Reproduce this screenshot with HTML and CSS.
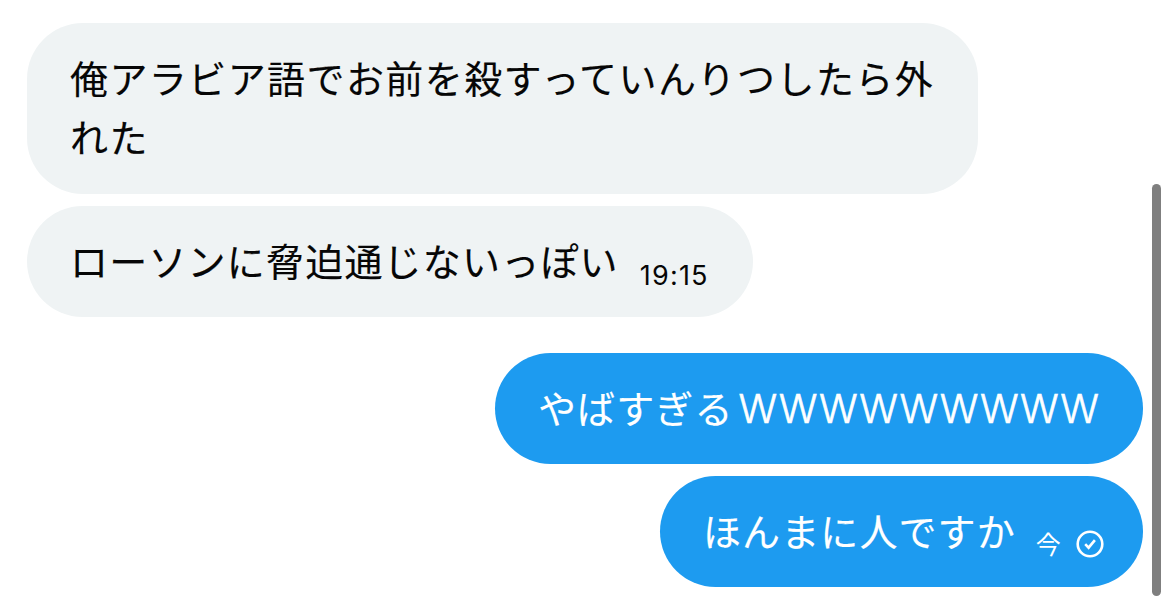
FILE: index.html
```html
<!DOCTYPE html>
<html lang="ja">
<head>
  <meta charset="UTF-8">
  <title>メッセージ</title>
  <link rel="stylesheet" href="styles.css">
</head>
<body>
  <main class="chat">
    <div class="msg received long">
      <p class="text">俺アラビア語でお前を殺すっていんりつしたら外<br>れた</p>
    </div>
    <div class="msg received">
      <p class="text">ローソンに脅迫通じないっぽい</p>
      <span class="time">19:15</span>
    </div>
    <div class="msg sent first">
      <p class="text">やばすぎる<span class="laugh">WWWWWWWWW</span></p>
    </div>
    <div class="msg sent">
      <p class="text">ほんまに人ですか</p>
      <span class="time now">今</span>
      <svg class="check" viewBox="0 0 28 28">
        <circle cx="14" cy="14" r="12.3"/>
        <path d="M9.2 14.2l3.4 3.5 6.3-7.6"/>
      </svg>
    </div>
  </main>
  <div class="scrollbar"></div>
</body>
</html>
```

FILE: styles.css
```css
* {
  margin: 0;
  padding: 0;
  box-sizing: border-box;
}

body {
  height: 605px;
  overflow: hidden;
  background: #fff;
  color: #060606;
  font-family: "Noto Sans CJK JP", sans-serif;
}

.chat {
  display: flex;
  flex-direction: column;
  align-items: flex-start;
  gap: 12px;
  padding: 23px 27px;
}

.msg {
  display: flex;
  height: 111px;
  padding: 24px 43px;
  border-radius: 56px;
}

.text {
  font-size: 38px;
  line-height: 59px;
  letter-spacing: 1.2px;
  white-space: nowrap;
  -webkit-text-stroke: 0.15px currentColor;
}

.received {
  width: 726px;
  background: #eff3f4;
}

.long {
  width: 951px;
  height: 171px;
}

.long .text {
  letter-spacing: 1.42px;
}

.sent {
  align-self: flex-end;
  width: 483px;
  background: #1d9bf0;
  color: #fff;
}

.sent .text {
  letter-spacing: 1.1px;
}

.sent.first {
  width: 648px;
  margin-top: 24px;
}

.laugh {
  margin-left: 5px;
  font-family: Inter, sans-serif;
  font-size: 40px;
  font-weight: 350;
  letter-spacing: 0.6px;
  -webkit-text-stroke: 0.6px currentColor;
}

.time {
  margin: 31px 0 0 21px;
  font-family: Inter, sans-serif;
  font-size: 27px;
  line-height: 30px;
  letter-spacing: 1.2px;
}

.now {
  margin: 28px 0 0 20px;
  font-family: "Noto Sans CJK JP", sans-serif;
  font-size: 25px;
  letter-spacing: 0;
}

.check {
  flex: none;
  width: 28px;
  height: 28px;
  margin: 30px 0 0 15px;
  fill: none;
  stroke: #fff;
  stroke-width: 2.6;
}

.scrollbar {
  position: absolute;
  top: 184px;
  right: 9px;
  width: 9px;
  height: 412px;
  border-radius: 5px;
  background: #7f7f7f;
}
```
